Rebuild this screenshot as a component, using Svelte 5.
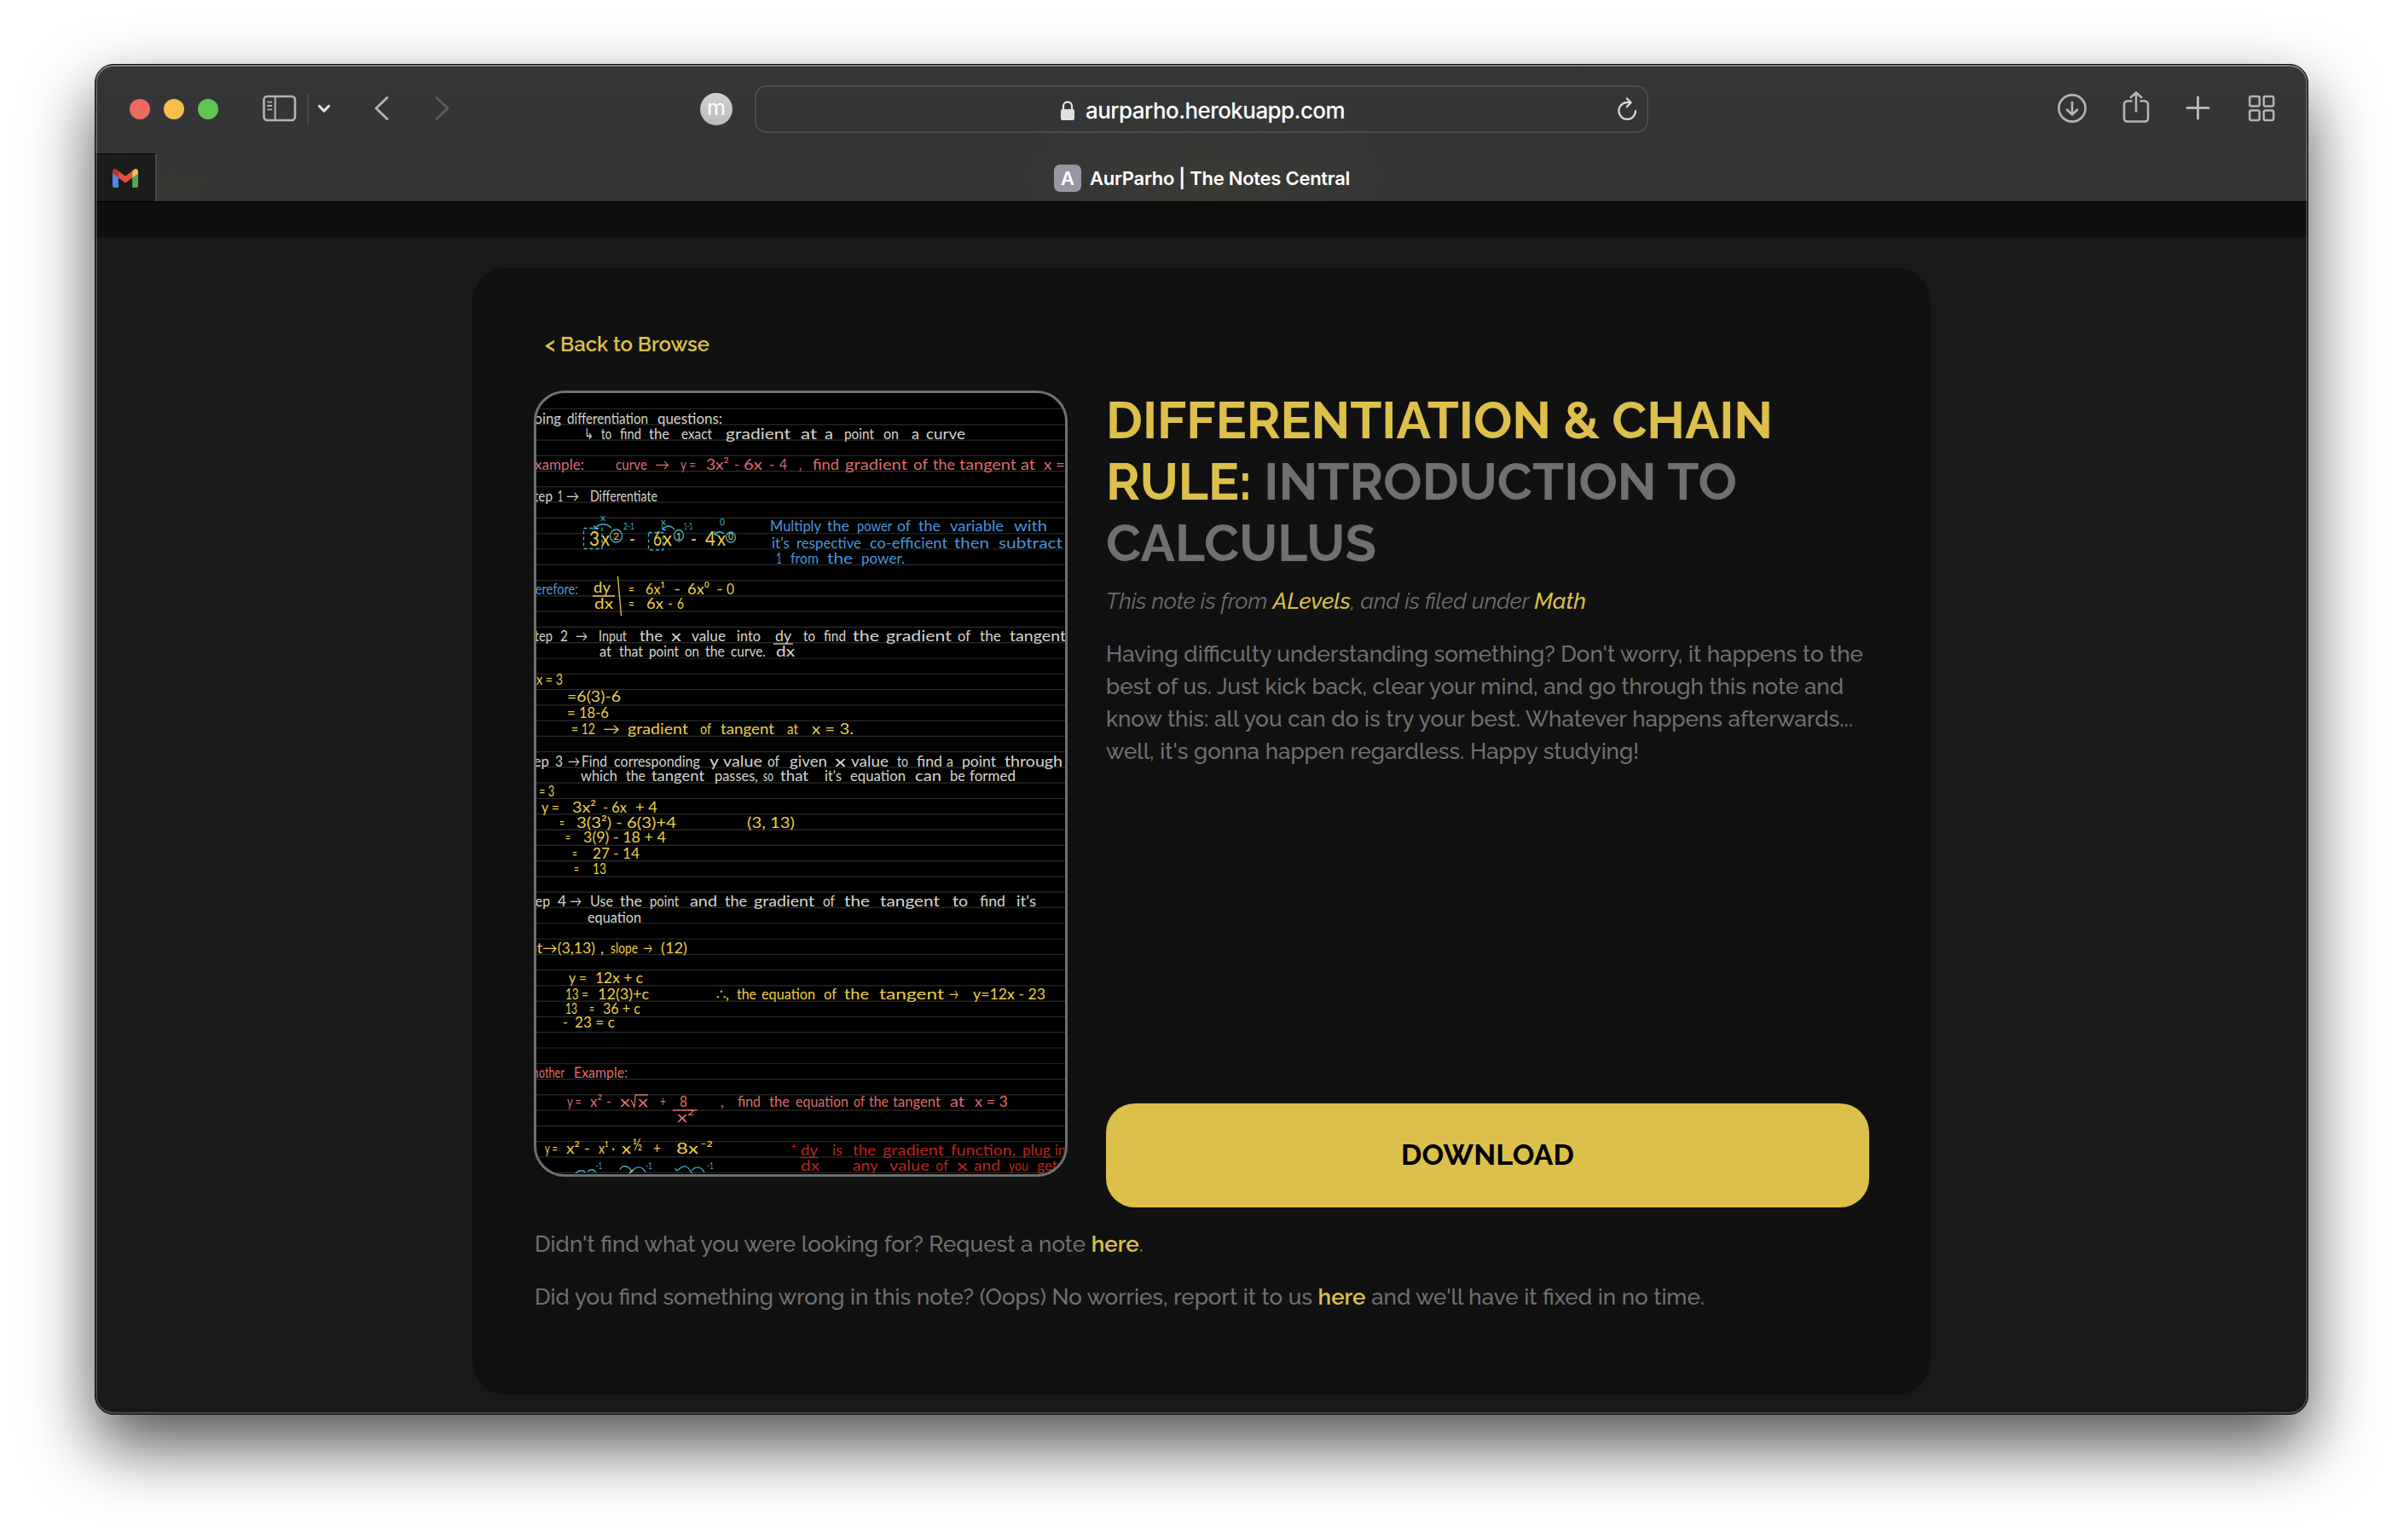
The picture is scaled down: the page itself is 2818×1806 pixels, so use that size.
<script>
  // Spreads a run of text over a set width by adjusting its tracking.
  function track(node, width) {
    const natural = node.getBoundingClientRect().width;
    node.style.letterSpacing = `${(width - natural) / node.textContent.length}px`;
  }

  // Same, through the gaps between words, so that ligatures stay intact.
  function spread(node, width) {
    const natural = node.getBoundingClientRect().width;
    const gaps = node.textContent.trim().split(/\s+/).length - 1;
    node.style.wordSpacing = `${(width - natural) / gaps}px`;
  }

  const rules = Array.from({ length: 50 }, (_, i) => 479.5 + i * 18.28);

  // Handwriting rows: pen, baseline, words as [text, start, end], optional size.
  const rows = [
    { pen: 'white', y: 497, words: [['Doing', 614, 658], ['differentiation', 665, 760], ['questions:', 771, 847]] },
    { pen: 'white', y: 515, words: [['↳', 685, 696], ['to', 705, 717], ['find', 727, 752], ['the', 761, 785], ['exact', 799, 835], ['gradient', 851, 927], ['at', 939, 958], ['a', 967, 977], ['point', 990, 1025], ['on', 1036, 1054], ['a', 1069, 1078], ['curve', 1086, 1132]] },
    { pen: 'pink', y: 550.5, words: [['Example:', 617, 685], ['curve', 722, 759], ['→', 768, 785], ['y =', 798, 816], ['3x²', 828, 855], ['-', 861, 867], ['6x', 872, 894], ['-', 902, 908], ['4', 914, 923], [',', 937, 940], ['find', 953, 984], ['gradient', 991, 1064], ['of', 1071, 1088], ['the', 1094, 1120], ['tangent', 1125, 1192], ['at', 1197, 1214], ['x =', 1224, 1249]] },
    { pen: 'white', y: 587.5, words: [['Step', 618, 648], ['1', 654, 660], ['→', 664, 679], ['Differentiate', 692, 771]] },
    { pen: 'yellow', y: 640, size: 23, words: [['3', 691, 703], ['x', 705, 715], ['-', 738, 745], ['6', 766, 776], ['x', 777, 788], ['-', 810, 817], ['4', 827, 839], ['x', 841, 851]] },
    { pen: 'yellow', y: 633, size: 12, words: [['2', 719, 726], ['1', 793, 799], ['0', 854, 860]] },
    { pen: 'teal', y: 620.5, size: 12, words: [['2-1', 731, 744], ['1-1', 802, 812]] },
    { pen: 'teal', y: 611, size: 12, words: [['x', 704, 710]] },
    { pen: 'teal', y: 616, size: 12, words: [['x', 775, 781], ['0', 844, 850]] },
    { pen: 'blue', y: 623, words: [['Multiply', 903, 963], ['the', 970, 996], ['power', 1005, 1046], ['of', 1052, 1068], ['the', 1077, 1103], ['variable', 1114, 1177], ['with', 1189, 1228]] },
    { pen: 'blue', y: 642.5, words: [["it's", 905, 926], ['respective', 934, 1010], ['co-efficient', 1020, 1111], ['then', 1119, 1160], ['subtract', 1171, 1246]] },
    { pen: 'blue', y: 660.5, words: [['1', 910, 917], ['from', 927, 960], ['the', 970, 1000], ['power.', 1010, 1061]] },
    { pen: 'blue', y: 697, words: [['Therefore:', 611, 678]] },
    { pen: 'yellow', y: 695, words: [['dy', 696, 716]] },
    { pen: 'yellow', y: 697, words: [['=', 737, 744], ['6x¹', 757, 780], ['-', 790, 798], ['6x⁰', 806, 832], ['-', 840, 848], ['0', 852, 861]] },
    { pen: 'yellow', y: 713.5, words: [['dx', 697, 719], ['=', 737, 744], ['6x', 758, 778], ['-', 783, 789], ['6', 794, 802]] },
    { pen: 'white', y: 752, words: [['Step', 619, 648], ['2', 657, 666], ['→', 675, 689], ['Input', 702, 735], ['the', 750, 777], ['x', 787, 799], ['value', 811, 851], ['into', 864, 892], ['dy', 909, 928], ['to', 942, 956], ['find', 966, 992], ['the', 1000, 1031], ['gradient', 1039, 1116], ['of', 1123, 1138], ['the', 1149, 1174], ['tangent', 1184, 1250]] },
    { pen: 'white', y: 769.5, words: [['at', 703, 717], ['that', 726, 754], ['point', 761, 796], ['on', 803, 820], ['the', 827, 850], ['curve.', 857, 898], ['dx', 910, 932]] },
    { pen: 'yellow', y: 803, words: [['x = 3', 629, 660]] },
    { pen: 'yellow', y: 823, words: [['=6(3)-6', 665, 728]] },
    { pen: 'yellow', y: 842, words: [['= 18-6', 665, 714]] },
    { pen: 'yellow', y: 861, words: [['= 12', 670, 698], ['→', 707, 727], ['gradient', 736, 807], ['of', 821, 834], ['tangent', 845, 908], ['at', 923, 936], ['x = 3.', 952, 1001]] },
    { pen: 'white', y: 898.5, words: [['Step', 611, 644], ['3', 651, 660], ['→', 666, 680], ['Find', 682, 712], ['corresponding', 720, 821], ['y', 832, 843], ['value', 848, 894], ['of', 900, 914], ['given', 926, 970], ['x', 979, 992], ['value', 998, 1042], ['to', 1052, 1065], ['find', 1075, 1105], ['a', 1110, 1118], ['point', 1128, 1168], ['through', 1178, 1246]] },
    { pen: 'white', y: 916, words: [['which', 681, 724], ['the', 734, 757], ['tangent', 764, 826], ['passes,', 838, 889], ['so', 895, 907], ['that', 915, 948], ["it's", 967, 987], ['equation', 997, 1062], ['can', 1073, 1104], ['be', 1114, 1132], ['formed', 1137, 1191]] },
    { pen: 'yellow', y: 934, words: [['= 3', 632, 650]] },
    { pen: 'yellow', y: 953, words: [['y =', 635, 656], ['3x²', 671, 699], ['- 6x', 707, 735], ['+ 4', 745, 771]] },
    { pen: 'yellow', y: 970.5, words: [['=', 656, 662], ['3(3²) - 6(3)+4', 676, 793], ['(3, 13)', 876, 932]] },
    { pen: 'yellow', y: 988, words: [['=', 663, 669], ['3(9) - 18 + 4', 684, 781]] },
    { pen: 'yellow', y: 1007, words: [['=', 671, 677], ['27 - 14', 695, 750]] },
    { pen: 'yellow', y: 1024.5, words: [['=', 673, 679], ['13', 695, 711]] },
    { pen: 'white', y: 1063, words: [['Step', 614, 645], ['4', 654, 664], ['→', 668, 682], ['Use', 692, 719], ['the', 727, 753], ['point', 762, 796], ['and', 809, 841], ['the', 850, 876], ['gradient', 884, 955], ['of', 965, 979], ['the', 990, 1020], ['tangent', 1032, 1102], ['to', 1117, 1135], ['find', 1149, 1179], ["it's", 1192, 1215]] },
    { pen: 'white', y: 1082, words: [['equation', 689, 752]] },
    { pen: 'yellow', y: 1117.5, words: [['pt→(3,13)', 620, 698], [',', 704, 708], ['slope', 716, 748], ['→', 754, 765], ['(12)', 775, 806]] },
    { pen: 'yellow', y: 1153, words: [['y =', 667, 688], ['12x + c', 698, 754]] },
    { pen: 'yellow', y: 1171.5, words: [['13 =', 663, 690], ['12(3)+c', 701, 761], ['∴,', 840, 855], ['the', 864, 887], ['equation', 893, 956], ['of', 966, 981], ['the', 990, 1019], ['tangent', 1031, 1107], ['→', 1113, 1124], ['y=12x - 23', 1141, 1226]] },
    { pen: 'yellow', y: 1189, words: [['13', 663, 677], ['=', 691, 697], ['36 + c', 707, 751]] },
    { pen: 'yellow', y: 1205, words: [['-', 660, 666], ['23 = c', 674, 721]] },
    { pen: 'pink', y: 1263.5, words: [['Another', 616, 662], ['Example:', 673, 736]] },
    { pen: 'pink', y: 1298, words: [['y =', 665, 682], ['x² -', 692, 717], ['x', 727, 739], ['x', 748, 760], ['+', 774, 781], ['8', 797, 806], [',', 845, 849], ['find', 865, 892], ['the', 902, 926], ['equation', 933, 995], ['of', 1001, 1014], ['the', 1019, 1042], ['tangent', 1047, 1103], ['at', 1114, 1131], ['x = 3', 1143, 1182]] },
    { pen: 'pink', y: 1316, words: [['x²', 794, 814]] },
    { pen: 'yellow', y: 1353, words: [['y =', 639, 654], ['x² -', 664, 692], ['x¹ ·', 702, 721], ['x', 729, 740], ['+', 766, 775], ['8x', 793, 819], ['⁻²', 821, 836]] },
    { pen: 'yellow', y: 1349, size: 20, words: [['½', 742, 753]] },
    { pen: 'red', y: 1348, size: 12, words: [['+', 928, 934]] },
    { pen: 'red', y: 1354.5, words: [['dy', 939, 959], ['is', 976, 988], ['the', 1000, 1027], ['gradient', 1035, 1107], ['function,', 1115, 1191], ['plug', 1199, 1232], ['in', 1237, 1250]] },
    { pen: 'red', y: 1372.5, words: [['dx', 939, 961], ['any', 1000, 1030], ['value', 1043, 1090], ['of', 1097, 1112], ['x', 1122, 1135], ['and', 1142, 1173], ['you', 1183, 1206], ['get', 1216, 1240]] },
    { pen: 'teal', y: 1371, size: 11, words: [['-1', 699, 706], ['-1', 757, 765], ['-1', 829, 837]] }
  ];

  const body = [
    ["Having difficulty understanding something? Don't worry, it happens to the", 888],
    ['best of us. Just kick back, clear your mind, and go through this note and', 865],
    ['know this: all you can do is try your best. Whatever happens afterwards...', 876],
    ["well, it's gonna happen regardless. Happy studying!", 625]
  ];
</script>

<div class="desktop">
  <div class="window">
    <header class="chrome">
      <div class="toolbar">
        <div class="lights"><i class="close"></i><i class="min"></i><i class="max"></i></div>
        <svg class="icon sidebar" width="40" height="40" viewBox="0 0 40 40">
          <rect x="1.5" y="5" width="36.5" height="28" rx="4" stroke-width="2.6" />
          <path d="M14.700 5v28" stroke-width="2" />
          <path d="M6 11.600h4.400M6 16h4.400M6 20.400h4.400" stroke-width="1.8" />
        </svg>
        <span class="rule"></span>
        <svg class="icon chevron" width="16" height="40" viewBox="0 0 16 40"><path d="M2.500 16.500 8 22.200l5.500-5.700" stroke-width="3.2" /></svg>
        <svg class="icon back" width="20" height="40" viewBox="0 0 20 40"><path d="M17 6.500 4 19l13 12.500" stroke-width="2.8" /></svg>
        <svg class="icon forward" width="20" height="40" viewBox="0 0 20 40"><path d="M3 6.500 16 19 3 31.500" stroke-width="2.8" /></svg>
        <span class="extension">m</span>
        <div class="address">
          <span class="url">
            <svg width="16" height="24" viewBox="0 0 16 24">
              <path d="M3 11V6.500C3 0 13 0 13 6.500V11" fill="none" stroke="#e0e0e0" stroke-width="2.200" />
              <rect y="10" width="16" height="13" rx="2" fill="#e0e0e0" />
            </svg>
            <span use:track={304}>aurparho.herokuapp.com</span>
          </span>
          <svg class="icon reload" width="24" height="28" viewBox="0 0 24 28">
            <path d="M22 16a9.800 9.800 0 1 1-9.800-9.800h4" stroke-width="2.200" />
            <path d="M11.800 1.500 16.600 6.300l-4.800 5" stroke-width="2.200" />
          </svg>
        </div>
        <svg class="icon download" width="36" height="40" viewBox="0 0 36 40">
          <circle cx="18" cy="19" r="15.600" stroke-width="2.600" />
          <path d="M18 12v14M12 20.700l6 5.800 6-5.800" stroke-width="2.600" />
        </svg>
        <svg class="icon share" width="32" height="40" viewBox="0 0 32 40">
          <path d="M10.500 10.500H6a4 4 0 0 0-4 4V31a3.500 3.500 0 0 0 3.500 3.500h21A3.500 3.500 0 0 0 30 31V14.500a4 4 0 0 0-4-4h-4.500" stroke-width="2.600" />
          <path d="M16 22.500V1M9.800 6.200 16 .5l6.200 5.700" stroke-width="2.600" />
        </svg>
        <svg class="icon plus" width="30" height="40" viewBox="0 0 30 40"><path d="M14.500 6v25M2 18.500h25" stroke-width="3" /></svg>
        <svg class="icon grid" width="32" height="40" viewBox="0 0 32 40">
          <g stroke-width="2.500">
            <rect x="2.200" y="5" width="11.500" height="11.500" rx="2" /><rect x="18.700" y="5" width="11.500" height="11.500" rx="2" />
            <rect x="2.200" y="21.500" width="11.500" height="11.500" rx="2" /><rect x="18.700" y="21.500" width="11.500" height="11.500" rx="2" />
          </g>
        </svg>
      </div>
      <div class="tabs">
        <div class="pinned">
          <svg width="30" height="22" viewBox="0 0 30 22">
            <path d="M0 5h6.800v17H2a2 2 0 0 1-2-2z" fill="#4f86ee" />
            <path d="M23.200 5H30v15a2 2 0 0 1-2 2h-4.800z" fill="#55a85a" />
            <path d="M6.800 2.400 15 8.600l8.200-6.200v8.200L15 16.400l-8.200-5.800z" fill="#de5140" />
            <path d="M0 3C0 .3 3-.9 5.200.9l1.600 1.300v8.400L0 5.600z" fill="#b8352b" />
            <path d="M30 3c0-2.700-3-3.900-5.200-2.100l-1.600 1.300v8.400l6.800-5z" fill="#f3c143" />
          </svg>
        </div>
        <div class="tab"><span class="favicon">A</span><span use:track={305}>AurParho | The Notes Central</span></div>
      </div>
    </header>

    <div class="navband"></div>

    <main>
      <section class="card">
        <div class="crumb"><span use:track={193}>&lt; Back to Browse</span></div>
        <div class="note">
          <svg class="preview" viewBox="629 461 620 916" width="626" height="922">
            {#each rules as y}<path class="ruled" d="M629 {y}h620" />{/each}
            {#each rows as row}
              <g class={row.pen} font-size={row.size ?? 17.5}>
                {#each row.words as [word, from, to]}
                  <text x={from} y={row.y} textLength={to - from} lengthAdjust="spacingAndGlyphs">{word}</text>
                {/each}
              </g>
            {/each}
            <g class="stroke teal">
              <rect x="684.500" y="619.500" width="21.500" height="24" stroke-dasharray="4 3" />
              <rect x="760.500" y="624.500" width="17" height="20.500" stroke-dasharray="4 3" />
              <ellipse cx="722.500" cy="628.500" rx="7" ry="7.500" />
              <ellipse cx="796" cy="628" rx="5.500" ry="6.500" />
              <ellipse cx="857" cy="630" rx="5.500" ry="6" />
              <path d="M717 619q-10-9-20 1m0-4v4l4 .5M791 621q-7-8-14 0m0-4v4l4 .5M849 626q-6-5-11 1m0-4v4l4 .5" />
              <path d="M675 1376q6-6 12-1M689 1374q6-5 10 1M727 1372c2-6 10-6 14 2 4-6 12-8 16 1M792 1370c2 8 5-4 12-2 6 2 4 6 8 8M811 1373c4-6 12-5 15 2" />
            </g>
            <g class="stroke yellow"><path d="M695 699h26M724.500 676l4 46M738 1376l4-4" /></g>
            <g class="stroke white"><path d="M907 755h23" /></g>
            <g class="stroke pink"><path d="M789 1302h28.500M740 1290l4 8 1-14h15" /></g>
            <g class="stroke red"><path d="M939 1357.500h20" /></g>
          </svg>
          <div class="details">
            <h1>
              <span class="line"><b use:track={782}>DIFFERENTIATION &amp; CHAIN</b></span>
              <span class="line"><span use:track={740}><b>RULE:</b> INTRODUCTION TO</span></span>
              <span class="line"><span use:track={317}>CALCULUS</span></span>
            </h1>
            <p class="filed"><span use:spread={563}>This note is from <b>ALevels</b>, and is filed under <b>Math</b></span></p>
            <p>{#each body as [text, width]}<span class="line"><span use:spread={width}>{text}</span></span>{/each}</p>
            <button><span use:track={203}>DOWNLOAD</span></button>
          </div>
        </div>
        <div class="foot">
          <p><span use:spread={714}>Didn't find what you were looking for? Request a note <b>here</b>.</span></p>
          <p><span use:spread={1372}>Did you find something wrong in this note? (Oops) No worries, report it to us <b>here</b> and we'll have it fixed in no time.</span></p>
        </div>
      </section>
    </main>
  </div>
</div>

<style>
  :global(body) { background: #fff; }
  .desktop {
    box-sizing: border-box;
    width: 2818px;
    height: 1806px;
    padding: 75px 111px;
    overflow: hidden;
    background: #fff;
  }
  .window {
    position: relative;
    box-sizing: border-box;
    width: 2596px;
    height: 1584px;
    border: 1px solid #050505;
    border-radius: 22px;
    overflow: hidden;
    background: #191919;
    box-shadow: 0 36px 80px rgba(0, 0, 0, 0.68);
    display: flex;
    flex-direction: column;
  }
  .window::after {
    content: '';
    position: absolute;
    inset: 0;
    border-radius: 21px;
    box-shadow: inset 0 0 0 2px rgba(255, 255, 255, 0.2), inset 0 2px 0 rgba(255, 255, 255, 0.22);
    pointer-events: none;
  }
  .chrome {
    font-family: Inter, 'Liberation Sans', sans-serif;
    background:
      radial-gradient(ellipse 300px 130px at 1300px 160px, #3b3a34, transparent),
      radial-gradient(ellipse 180px 120px at 90px 150px, #363632, transparent),
      linear-gradient(#353638, #323335);
  }
  .toolbar {
    display: flex;
    align-items: center;
    box-sizing: border-box;
    height: 104px;
    padding-left: 40px;
  }
  .lights { display: flex; gap: 16px; }
  .lights i { width: 24px; height: 24px; border-radius: 50%; }
  .close { background: #ed6a5f; }
  .min { background: #f5bf4f; }
  .max { background: #61c554; }
  .icon {
    flex: none;
    fill: none;
    stroke: #b4b4b5;
    stroke-linecap: round;
    stroke-linejoin: round;
    overflow: visible;
  }
  .sidebar { margin-left: 52px; }
  .rule { width: 2px; height: 36px; margin-left: 12px; background: #47484a; }
  .chevron { margin-left: 10px; stroke: #dededf; }
  .back { margin-left: 49px; }
  .forward { margin-left: 52px; stroke: #5b5c5e; }
  .extension {
    width: 38px;
    height: 38px;
    margin-left: 292px;
    border-radius: 50%;
    background: linear-gradient(#cfcfcf, #bcbcbc);
    color: #fff;
    font-size: 25px;
    line-height: 35px;
    text-align: center;
  }
  .address {
    box-sizing: border-box;
    width: 1048px;
    height: 56px;
    margin-left: 26px;
    padding: 0 10px;
    border: 2px solid #4b4c4e;
    border-radius: 14px;
    display: grid;
    grid-template-columns: 25px 1fr 25px;
    align-items: center;
  }
  .url {
    grid-column: 2;
    display: flex;
    align-items: center;
    justify-content: center;
    gap: 13px;
    padding: 3px 0 0 3px;
    color: #fff;
    font-size: 26px;
    font-weight: 500;
    white-space: nowrap;
  }
  .reload { stroke: #dcdcdc; }
  .download { margin-left: 479px; }
  .share { margin-left: 41px; }
  .plus { margin-left: 42px; }
  .grid { margin-left: 43px; }
  .tabs {
    display: flex;
    box-sizing: border-box;
    height: 57px;
    border-bottom: 1px solid #000;
  }
  .pinned {
    box-sizing: border-box;
    width: 72px;
    border-top: 1px solid #000;
    border-right: 2px solid #4a4a4a;
    background: #1c1c1c;
    padding: 17px 0 0 20px;
  }
  .tab {
    display: flex;
    align-items: center;
    padding: 1px 0 0 1052px;
    gap: 10px;
    color: #fff;
    font-size: 22px;
    font-weight: 600;
    white-space: nowrap;
  }
  .favicon {
    width: 32px;
    height: 32px;
    border-radius: 7px;
    background: #9796a3;
    line-height: 32px;
    text-align: center;
    margin-top: 1px;
  }
  .navband { height: 41px; background: #0f0f0f; }
  main {
    display: flex;
    justify-content: center;
    padding-top: 36px;
    font-family: Raleway, Lato, 'Open Sans', sans-serif;
  }
  .card {
    box-sizing: border-box;
    width: 1710px;
    height: 1322px;
    padding: 75px 72px 0;
    border-radius: 40px;
    background: #111;
    color: #707070;
    white-space: nowrap;
  }
  .crumb {
    margin: 0 0 39px 13px;
    color: #dcc04b;
    font-size: 24px;
    font-weight: 600;
    line-height: 30px;
  }
  .note { display: flex; gap: 45px; height: 958px; }
  .preview {
    flex: none;
    box-sizing: border-box;
    border: 3px solid #707070;
    border-radius: 36px;
    background: #000;
    overflow: hidden;
    font-family: Lato, 'DejaVu Sans', sans-serif;
  }
  .ruled { stroke: #2b2b2b; stroke-width: 1.2; }
  .white { fill: #d6d6d0; stroke: #d6d6d0; }
  .pink { fill: #dc6b6b; stroke: #dc6b6b; }
  .yellow { fill: #e9cf45; stroke: #e9cf45; }
  .blue { fill: #4d94dc; stroke: #4d94dc; }
  .teal { fill: #3fb2c4; stroke: #3fb2c4; }
  .red { fill: #b5261f; stroke: #b5261f; }
  text { stroke: none; }
  .stroke { fill: none; stroke-width: 1.3; }
  .details { display: flex; flex-direction: column; width: 895px; }
  .line { display: block; }
  h1 {
    margin: -1px 0 0;
    font-size: 60px;
    font-weight: 700;
    line-height: 72px;
  }
  b { color: #dcc04b; font-weight: 600; }
  h1 b { font-weight: 700; }
  p {
    margin: 24px 0 0;
    font-size: 26px;
    font-weight: 500;
    line-height: 38px;
  }
  .filed { margin-top: 13px; font-style: italic; font-weight: 400; }
  .filed b { font-weight: 500; }
  .foot { padding-left: 1px; }
  button {
    height: 122px;
    margin-top: auto;
    padding: 0 0 3px;
    border: 0;
    border-radius: 34px;
    background: #dcc04b;
    color: #000;
    font: 700 34px Raleway, Lato, sans-serif;
  }
</style>
